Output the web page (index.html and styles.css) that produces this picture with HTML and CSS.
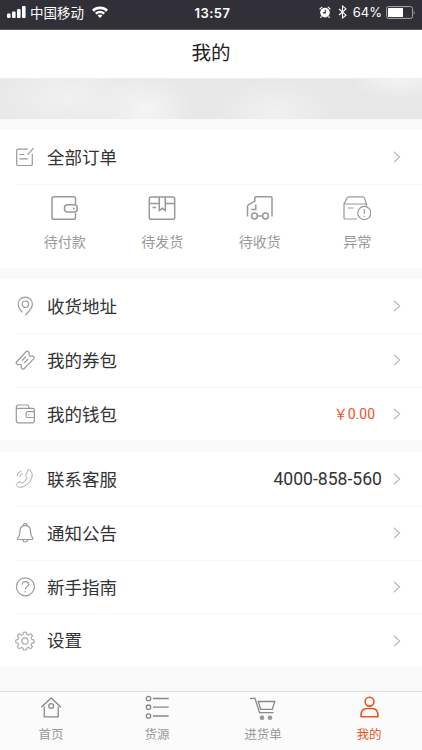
FILE: index.html
```
<!DOCTYPE html>
<html lang="zh-CN">
<head>
    <meta charset="UTF-8">
    <meta name="viewport" content="width=device-width, initial-scale=1.0">
    <title>我的</title>
    <link rel="stylesheet" href="styles.css">
</head>

<body>
    <div class="status-bar">
        <div class="status-left">
            <svg class="signal" width="19" height="12" viewBox="0 0 19 12">
                <rect x="0" y="7.5" width="3.6" height="4.5" rx="1" />
                <rect x="5" y="5.5" width="3.6" height="6.5" rx="1" />
                <rect x="10" y="3" width="3.6" height="9" rx="1" />
                <rect x="15" y="0" width="3.6" height="12" rx="1" />
            </svg>
            <span class="carrier">中国移动</span>
            <svg class="wifi" width="16" height="12" viewBox="0 0 16 12">
                <path d="M0 3.8a11.5 11.5 0 0 1 16 0l-1.8 1.9a9 9 0 0 0-12.4 0z" />
                <path d="M2.9 6.8a7.4 7.4 0 0 1 10.2 0l-1.7 1.8a5 5 0 0 0-6.8 0z" />
                <path d="M5.6 9.6a3.5 3.5 0 0 1 4.8 0L8 12z" />
            </svg>
        </div>
        <div class="status-time">13:57</div>
        <div class="status-right">
            <svg width="12" height="12" viewBox="0 0 12 12">
                <circle cx="6" cy="6.6" r="4.8" />
                <path d="M.6 3.4L3.2.9M11.4 3.4L8.8.9M2.5 10.5l-1 1.2M9.5 10.5l1 1.2" stroke="#fff" stroke-width="1.3" />
                <path d="M6.3 3.8v3.1H3.9" fill="none" stroke="#312f37" stroke-width="1.1" />
            </svg>
            <svg class="bluetooth" width="9" height="14" viewBox="0 0 9 14">
                <path d="M1 4l7 6.200L4.500 13V1L8 3.900 1 10" fill="none" stroke="#fff" stroke-width="1.1" />
            </svg>
            <span class="percent">64%</span>
            <svg class="battery" width="30" height="13" viewBox="0 0 30 13">
                <rect x=".6" y=".6" width="26" height="11.8" rx="2" fill="none" stroke="#a9a8ac" />
                <rect x="2" y="2" width="15" height="9" rx=".5" />
                <path d="M27.8 4.500q1.700 2 0 4z" fill="#a9a8ac" />
            </svg>
        </div>
    </div>

    <header class="header">我的</header>
    <div class="banner"></div>

    <main>
        <section class="card">
            <a class="row">
                <svg class="row-icon" viewBox="0 0 20 20">
                    <path d="M12.8 2.2H3a1.3 1.3 0 0 0-1.3 1.3v13.7a1.3 1.3 0 0 0 1.3 1.3h13a1.3 1.3 0 0 0 1.3-1.3V6.8M18.6 1.2l-6 6.6M4.4 7.5h5M4.4 11.8h8.4" />
                </svg>
                <span class="label">全部订单</span>
                <svg class="arrow" viewBox="0 0 8 12"><path d="M1 .8L6.6 6 1 11.2" /></svg>
            </a>
            <div class="orders">
                <a class="order">
                    <svg viewBox="0 0 28 26">
                        <path d="M24.500 9V3.500A1.800 1.800 0 0 0 22.700 1.700H2.800A1.800 1.800 0 0 0 1 3.500v19a1.800 1.800 0 0 0 1.800 1.800h19.900a1.800 1.800 0 0 0 1.800-1.800V18" />
                        <rect x="13.500" y="9.800" width="12.700" height="7.200" rx="3" />
                        <circle class="dot" cx="22.800" cy="13.400" r="1" />
                    </svg>
                    <span>待付款</span>
                </a>
                <a class="order">
                    <svg viewBox="0 0 28 26">
                        <rect x="1.300" y="2" width="25.400" height="22.200" rx="1.800" />
                        <path d="M1.500 8.500H11M17.500 8.500h9M11.300 2v13.500l3-2.200 3 2.200V2M4.500 12.500h3.500" />
                    </svg>
                    <span>待发货</span>
                </a>
                <a class="order">
                    <svg viewBox="0 0 28 26">
                        <path d="M1.500 21.500V11.800q0-1.600 1.500-2.400l5.800-3V3q0-1.300 1.300-1.300h14.600q1.300 0 1.300 1.300v18.500M9.800 9.500v5H5.200M11.400 21h5.200" />
                        <circle cx="8.500" cy="21" r="2.900" />
                        <circle cx="19.500" cy="21" r="2.900" />
                    </svg>
                    <span>待收货</span>
                </a>
                <a class="order thin">
                    <svg viewBox="0 0 28 26">
                        <path d="M14 24H2.200A1.200 1.200 0 0 1 1 22.800V9l3-6q.6-1.200 2-1.200h13.500q1.400 0 1.900 1.200l2.100 6v2M1 9h22.500M5 13h5.500" />
                        <circle cx="21.300" cy="18" r="6.600" />
                        <path d="M21.300 14.300v4.500M21.300 20.800v1.200" />
                    </svg>
                    <span>异常</span>
                </a>
            </div>
        </section>

        <section class="card">
            <a class="row">
                <svg class="row-icon" viewBox="0 0 20 20">
                    <path d="M7.300 16.300C4.700 13.400 3.200 11 3.200 8.200a7.100 7.100 0 0 1 14.200 0c0 4-3.400 7.300-7.100 11" />
                    <circle cx="10.300" cy="8.200" r="3.200" />
                </svg>
                <span class="label">收货地址</span>
                <svg class="arrow" viewBox="0 0 8 12"><path d="M1 .8L6.600 6 1 11.200" /></svg>
            </a>
            <a class="row">
                <svg class="row-icon" viewBox="0 0 20 20">
                    <path d="M1.500 12L11.300 1.500q1-.9 1.900 0l1 1.200q-.6 2.300.4 3.100t3.100.1l1.100 1q.8.900 0 1.800L9 18.700q-.9.800-1.800 0l-1-1.100q.5-2-.5-2.900t-3 0l-1.200-1q-.7-.9 0-1.700zM7 10.700l4-4.200M9.300 13l4-4.200" />
                </svg>
                <span class="label">我的券包</span>
                <svg class="arrow" viewBox="0 0 8 12"><path d="M1 .8L6.600 6 1 11.200" /></svg>
            </a>
            <a class="row">
                <svg class="row-icon" viewBox="0 0 20 20">
                    <path d="M1.300 3.500v13a2.300 2.300 0 0 0 2.300 2.300h13.600a2.200 2.200 0 0 0 2.200-2.200V6a1.700 1.700 0 0 0-1.700-1.700H2.300Q1.300 4.300 1.300 3.200T2.700 1h9.500q1.600 0 1.900 3.300M19.400 7.700h-6.800a1.500 1.500 0 0 0-1.500 1.500V12a1.500 1.500 0 0 0 1.500 1.500h6.800M13.500 10.600h1" />
                </svg>
                <span class="label">我的钱包</span>
                <span class="money">￥0.00</span>
                <svg class="arrow" viewBox="0 0 8 12"><path d="M1 .8L6.600 6 1 11.200" /></svg>
            </a>
        </section>

        <section class="card">
            <a class="row">
                <svg class="row-icon light" viewBox="0 0 20 20">
                    <path d="M13.200.8q1.200-.5 2 .3 3 3.200 1.800 7.200-1.400 4.300-5.200 7.400-3.600 3-7.400 2.600-1.600-.3-2.700-1.800-.8-1 .3-2l2-1.500q1.200-.7 2.100.4l.8 1q3.700-1.600 5.400-6l-1-.8q-1-1-.3-2.100zM5.200 7.800q-.7-2.200 2.600-3.500M2.300 7Q1.600 3.400 6.500 1.800" />
                </svg>
                <span class="label">联系客服</span>
                <span class="phone">4000-858-560</span>
                <svg class="arrow" viewBox="0 0 8 12"><path d="M1 .8L6.600 6 1 11.200" /></svg>
            </a>
            <a class="row">
                <svg class="row-icon" viewBox="0 0 20 20">
                    <path d="M5 8.300q0-5.700 5.200-5.700t5.300 5.700q0 4.200 2.200 6.900.6 1.300-.8 1.300H3.500q-1.400 0-.7-1.300Q5 12.500 5 8.300M8.300 2.500q0-1.800 1.900-1.800t1.900 1.800M7.800 17q.6 2 2.400 2t2.500-2" />
                </svg>
                <span class="label">通知公告</span>
                <svg class="arrow" viewBox="0 0 8 12"><path d="M1 .8L6.600 6 1 11.200" /></svg>
            </a>
            <a class="row">
                <svg class="row-icon" viewBox="0 0 20 20">
                    <circle cx="10.400" cy="9.800" r="9" />
                    <path d="M7.200 7.800q0-3.200 3.200-3.200t3.200 2.700q0 1.300-1.600 2.500t-1.600 2.700M10.400 14v1.500" />
                </svg>
                <span class="label">新手指南</span>
                <svg class="arrow" viewBox="0 0 8 12"><path d="M1 .8L6.600 6 1 11.200" /></svg>
            </a>
            <a class="row">
                <svg class="row-icon gear" viewBox="0 0 20 20">
                    <path d="M8.500 1.300q1.400-.5 2.800 0l.6 2.200 1.500.6 2.100-1.200q1.300.6 1.900 1.900l-1.200 2.100.6 1.500 2.100.6q.5 1.300 0 2.700l-2.100.6-.6 1.500 1.200 2q-.6 1.300-1.900 1.900l-2.100-1.200-1.500.6-.6 1.700q-1.400.4-2.800 0l-.6-1.700-1.500-.6-2.100 1.200q-1.300-.6-1.900-1.900l1.200-2-.6-1.500-2-.6q-.5-1.400 0-2.700l2-.6.6-1.500-1.200-2.100q.6-1.300 1.900-1.900l2.100 1.200 1.500-.6z" />
                    <circle cx="9.900" cy="10" r="3.200" />
                </svg>
                <span class="label">设置</span>
                <svg class="arrow" viewBox="0 0 8 12"><path d="M1 .8L6.600 6 1 11.200" /></svg>
            </a>
        </section>
    </main>

    <nav class="tab-bar">
        <a class="tab">
            <svg viewBox="0 0 28 26">
                <path d="M7.200 12.500v10.300h14V12.500M4.300 13.200L14.200 4l9.700 9.200" />
                <circle cx="14.200" cy="12" r="2.400" />
            </svg>
            <span>首页</span>
        </a>
        <a class="tab">
            <svg viewBox="0 0 28 26">
                <circle cx="5.500" cy="4.500" r="2.200" />
                <circle cx="5.500" cy="13.200" r="2.200" />
                <circle cx="5.500" cy="22" r="2.200" />
                <path d="M10 4.500h15.700M10 13.200h15.700M10 22h15.700" />
            </svg>
            <span>货源</span>
        </a>
        <a class="tab">
            <svg viewBox="0 0 28 26">
                <path d="M1 4.300h5l4.500 14.300h14M9.300 7.500h16.500l-2.500 7.800H11.600z" />
                <circle class="dot" cx="13" cy="23.800" r="2.300" />
                <circle class="dot" cx="21" cy="23.800" r="2.300" />
            </svg>
            <span>进货单</span>
        </a>
        <a class="tab active">
            <svg viewBox="0 0 28 26">
                <circle cx="14.500" cy="7.700" r="4.400" />
                <path d="M6 22.800q-.4-8.300 6-8.300h5q6.400 0 6 8.300z" stroke-linejoin="round" />
            </svg>
            <span>我的</span>
        </a>
    </nav>
</body>

</html>
```
FILE: styles.css
```
* {
    box-sizing: border-box;
}

body {
    margin: 0;
    height: 750px;
    display: flex;
    flex-direction: column;
    overflow: hidden;
    background: #f9f9f9;
    color: #333;
    font-family: Roboto, "Noto Sans CJK SC", sans-serif;
}

svg {
    display: block;
    flex: none;
}

/* Status bar */
.status-bar {
    display: grid;
    grid-template-columns: 1fr auto 1fr;
    align-items: center;
    height: 30px;
    padding: 0 6px 5px 7px;
    background: #312f37;
    border-bottom: 1px solid #57555c;
    color: #fff;
    font-size: 13.5px;
    line-height: 20px;
}

.status-bar svg {
    fill: #fff;
}

.status-left,
.status-right {
    display: flex;
    align-items: center;
}

.status-right {
    justify-content: flex-end;
}

.carrier {
    margin: 1px 8px 0 4px;
}

.status-time {
    padding: 1px 0 0 2px;
    font-family: Inter, sans-serif;
    font-size: 13px;
    font-weight: 600;
    letter-spacing: 0.5px;
}

.bluetooth {
    margin: 0 6px 0 7px;
}

.percent {
    margin-right: 4px;
    font-family: Inter, sans-serif;
    font-size: 13px;
}

/* Header */
.header {
    height: 48px;
    background: #fff;
    color: #222;
    font-size: 19.5px;
    line-height: 47px;
    text-align: center;
}

.banner {
    height: 41px;
    border-top: 1px solid #eee;
    background:
        radial-gradient(80px 40px at 68px 18px, #f1f1f1, transparent),
        radial-gradient(50px 36px at 145px 30px, #f5f5f5, transparent),
        radial-gradient(60px 36px at 275px 34px, #f1f1f1, transparent),
        radial-gradient(50px 20px at 400px 0, #f4f4f4, transparent),
        #e7e7e7;
}

/* Cards and rows */
.card {
    margin-top: 11.5px;
    background: #fff;
}

.card:first-child {
    margin-top: 11px;
}

.card + .card:last-child {
    margin-top: 12px;
}

.row {
    display: flex;
    align-items: center;
    height: 53.7px;
    margin-left: 15px;
    padding-right: 21px;
}

.row + .row,
.orders {
    border-top: 1px solid #f6f6f6;
}

.row-icon {
    width: 20px;
    height: 20px;
    fill: none;
    stroke: #999;
    stroke-width: 1.2;
}

.row-icon.light {
    stroke: #aaa;
    stroke-width: 1;
}

.row-icon.gear {
    stroke: #aaa;
    stroke-width: 1.2;
}

.label {
    margin-left: 12px;
    margin-right: auto;
    padding-bottom: 1.5px;
    font-size: 17.5px;
}

.arrow {
    width: 8px;
    height: 12px;
    fill: none;
    stroke: #bbb;
    stroke-width: 1.2;
}

.money {
    margin-right: 18px;
    padding-bottom: 1px;
    color: #e8561f;
    font-size: 14px;
}

.phone {
    margin-right: 11px;
    font-size: 17.6px;
}

.orders {
    display: grid;
    grid-template-columns: repeat(4, 1fr);
    height: 84px;
    margin-left: 16px;
    padding-right: 16px;
}

.order {
    display: flex;
    flex-direction: column;
    align-items: center;
    padding-top: 10px;
    color: #999;
    font-size: 14px;
    line-height: 20px;
}

.order svg {
    width: 28px;
    height: 26px;
    margin-bottom: 11px;
    fill: none;
    stroke: #999;
    stroke-width: 1.5;
}

.order.thin svg {
    stroke-width: 1.2;
}

svg .dot {
    fill: #999;
    stroke: none;
}

/* Bottom tabs */
.tab-bar {
    display: grid;
    grid-template-columns: repeat(4, 106px);
    height: 59px;
    margin-top: auto;
    border-top: 1px solid #ddd;
    background: #fbfbfb;
}

.tab {
    display: flex;
    flex-direction: column;
    align-items: center;
    padding-top: 2px;
    padding-right: 4px;
    color: #999;
    font-size: 12.5px;
    line-height: 18px;
}

.tab svg {
    width: 28px;
    height: 26px;
    margin-bottom: 6px;
    overflow: visible;
    fill: none;
    stroke: #888;
    stroke-width: 1.3;
}

.tab.active {
    color: #e8561f;
}

.tab.active svg {
    stroke: #e8561f;
    stroke-width: 1.6;
}
```
